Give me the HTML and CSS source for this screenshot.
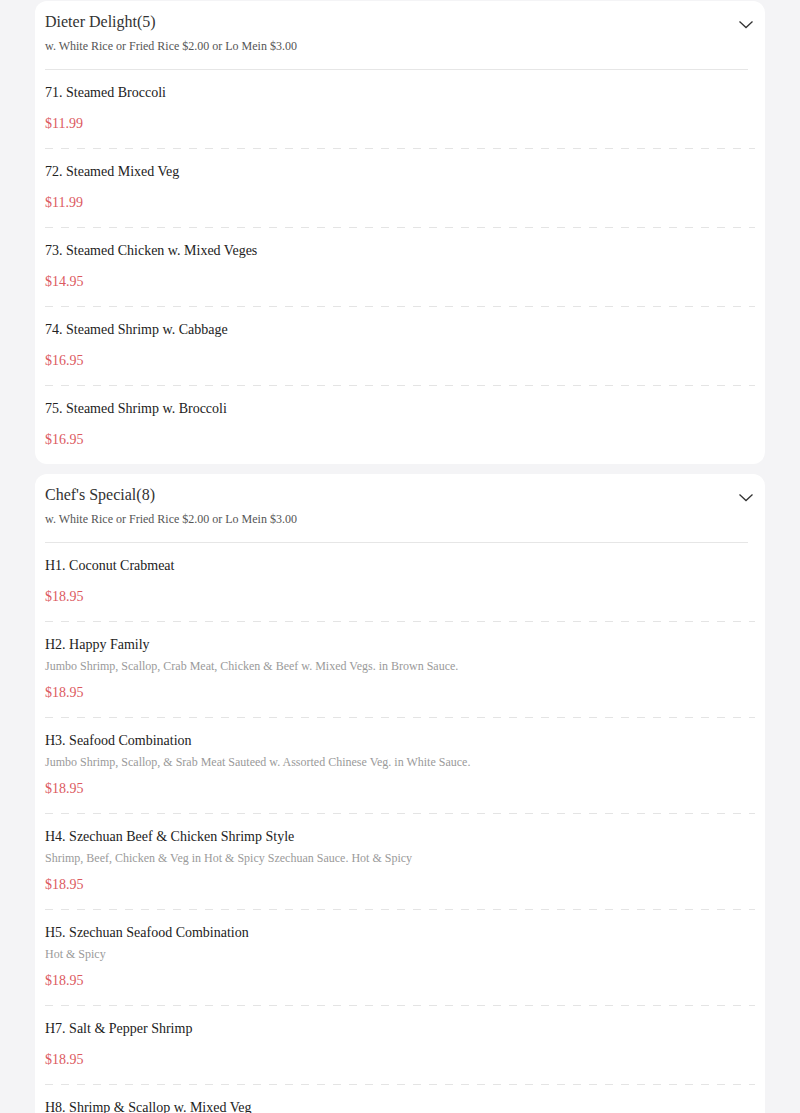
FILE: index.html
```html
<!DOCTYPE html>
<html lang="en">
<head>
<meta charset="utf-8">
<title>Menu</title>
<link rel="stylesheet" href="styles.css">
</head>
<body>
<main class="menu">
  <section class="category">
    <header class="cat-head">
      <div class="cat-text">
        <h2 class="cat-title">Dieter Delight(5)</h2>
        <p class="cat-sub">w. White Rice or Fried Rice $2.00 or Lo Mein $3.00</p>
      </div>
      <svg class="chev" width="16" height="9" viewBox="0 0 16 9"><path d="M1.5 1.5 L8 7.5 L14.5 1.5" fill="none" stroke="#333" stroke-width="1.3"/></svg>
    </header>
    <ul class="items">
      <li class="item"><div class="item-name">71. Steamed Broccoli</div><div class="item-price">$11.99</div></li>
      <li class="item"><div class="item-name">72. Steamed Mixed Veg</div><div class="item-price">$11.99</div></li>
      <li class="item"><div class="item-name">73. Steamed Chicken w. Mixed Veges</div><div class="item-price">$14.95</div></li>
      <li class="item"><div class="item-name">74. Steamed Shrimp w. Cabbage</div><div class="item-price">$16.95</div></li>
      <li class="item"><div class="item-name">75. Steamed Shrimp w. Broccoli</div><div class="item-price">$16.95</div></li>
    </ul>
  </section>
  <section class="category">
    <header class="cat-head">
      <div class="cat-text">
        <h2 class="cat-title">Chef's Special(8)</h2>
        <p class="cat-sub">w. White Rice or Fried Rice $2.00 or Lo Mein $3.00</p>
      </div>
      <svg class="chev" width="16" height="9" viewBox="0 0 16 9"><path d="M1.5 1.5 L8 7.5 L14.5 1.5" fill="none" stroke="#333" stroke-width="1.3"/></svg>
    </header>
    <ul class="items">
      <li class="item"><div class="item-name">H1. Coconut Crabmeat</div><div class="item-price">$18.95</div></li>
      <li class="item"><div class="item-name">H2. Happy Family</div><div class="item-desc">Jumbo Shrimp, Scallop, Crab Meat, Chicken &amp; Beef w. Mixed Vegs. in Brown Sauce.</div><div class="item-price">$18.95</div></li>
      <li class="item"><div class="item-name">H3. Seafood Combination</div><div class="item-desc">Jumbo Shrimp, Scallop, &amp; Srab Meat Sauteed w. Assorted Chinese Veg. in White Sauce.</div><div class="item-price">$18.95</div></li>
      <li class="item"><div class="item-name">H4. Szechuan Beef &amp; Chicken Shrimp Style</div><div class="item-desc">Shrimp, Beef, Chicken &amp; Veg in Hot &amp; Spicy Szechuan Sauce. Hot &amp; Spicy</div><div class="item-price">$18.95</div></li>
      <li class="item"><div class="item-name">H5. Szechuan Seafood Combination</div><div class="item-desc">Hot &amp; Spicy</div><div class="item-price">$18.95</div></li>
      <li class="item"><div class="item-name">H7. Salt &amp; Pepper Shrimp</div><div class="item-price">$18.95</div></li>
      <li class="item"><div class="item-name">H8. Shrimp &amp; Scallop w. Mixed Veg</div><div class="item-price">$18.95</div></li>
    </ul>
  </section>
</main>
</body>
</html>
```

FILE: styles.css
```css
html, body {
  margin: 0;
  padding: 0;
  background: #f4f4f6;
}
body {
  font-family: "Liberation Serif", "Times New Roman", serif;
  color: #222;
}
.menu {
  display: flex;
  flex-direction: column;
  gap: 10px;
  padding: 1px 35px 20px;
}
.category {
  background: #fff;
  border-radius: 12px;
  padding: 0 10px;
}
.cat-head {
  display: flex;
  justify-content: space-between;
  align-items: flex-start;
  padding: 10px 0 14px;
  margin-right: 7px;
  border-bottom: 1px solid #e6e6e6;
}
.cat-title {
  margin: 0;
  font-size: 16px;
  line-height: 22px;
  font-weight: normal;
  color: #333;
}
.cat-sub {
  margin: 4px 0 0;
  font-size: 12px;
  line-height: 18px;
  color: #555;
}
.chev {
  margin-top: 9px;
  margin-right: -6px;
}
.items {
  list-style: none;
  margin: 0;
  padding: 0;
}
.item {
  padding: 13px 0 15px;
  background-image: repeating-linear-gradient(to right, #e4e4e4 0 8px, transparent 8px 16px);
  background-size: 100% 1px;
  background-position: left bottom;
  background-repeat: no-repeat;
}
.item:last-child {
  background-image: none;
  padding-bottom: 14px;
}
.item-name {
  font-size: 14px;
  line-height: 20px;
  color: #222;
}
.item-desc {
  margin-top: 2px;
  font-size: 12px;
  line-height: 18px;
  color: #9a9a9a;
}
.item-price {
  margin-top: 11px;
  font-size: 14px;
  line-height: 20px;
  color: #dc5a5f;
}
.item-desc + .item-price {
  margin-top: 8px;
}
```
